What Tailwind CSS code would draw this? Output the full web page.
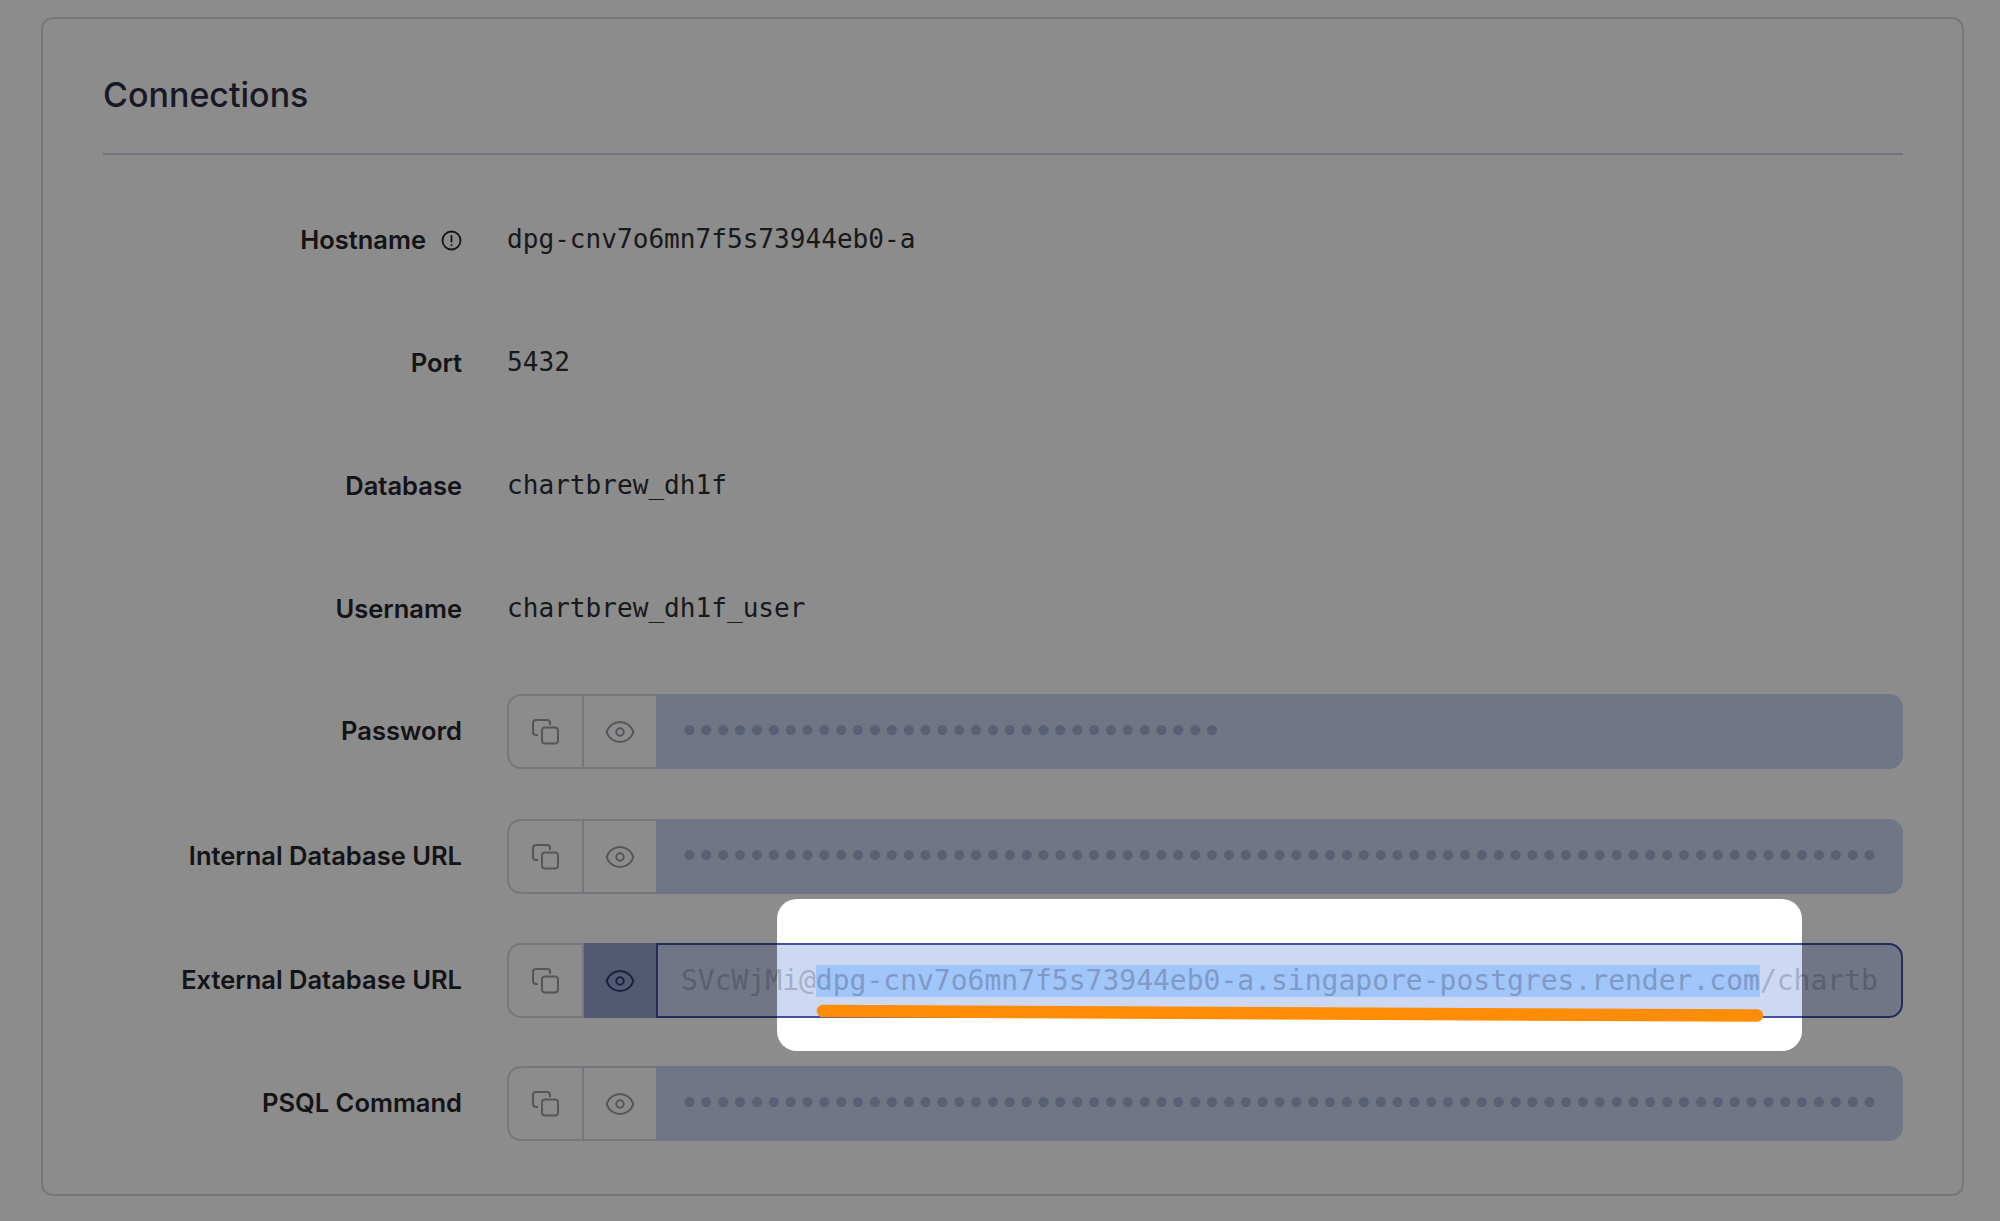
<!DOCTYPE html>
<html lang="en">
<head>
    <meta charset="UTF-8">
    <title>Connections</title>
    <script src="https://cdn.jsdelivr.net/npm/@tailwindcss/browser@4"></script>
</head>
<body class="relative w-[2000px] h-[1221px] overflow-hidden bg-white font-['Inter',sans-serif]">
    <!-- Card -->
    <section class="ml-[41px] mt-[17px] w-[1923px] h-[1179px] border-2 border-[#d8d8e4] rounded-[12px] pl-[60px] pr-[59px]">
        <h2 class="h-[136px] pt-[52px] text-[34px] leading-[48px] font-medium text-[#2f2f44] border-b-2 border-[#cfd2e6]">Connections</h2>

        <div class="flex items-center h-[75px] mt-[48px] mb-[48px]">
            <div class="flex items-center justify-end gap-[15px] w-[359px] mr-[45px] text-[25.5px] font-semibold text-[#26262c]">
                Hostname
                <svg class="w-[21px] h-[21px]" viewBox="0 0 21 21" fill="none" stroke="#26262c" stroke-width="1.8" stroke-linecap="round"><circle cx="10.5" cy="10.5" r="9"/><path d="M10.5 6v5.5"/><path d="M10.5 14.8v.2"/></svg>
            </div>
            <span class="font-['DejaVu_Sans_Mono',monospace] text-[26.1px] text-[#2e2e33] -mt-[2px]">dpg-cnv7o6mn7f5s73944eb0-a</span>
        </div>
        <div class="flex items-center h-[75px] mb-[48px]">
            <div class="w-[359px] mr-[45px] text-right text-[25.5px] font-semibold text-[#26262c]">Port</div>
            <span class="font-['DejaVu_Sans_Mono',monospace] text-[26.1px] text-[#2e2e33] -mt-[2px]">5432</span>
        </div>
        <div class="flex items-center h-[75px] mb-[48px]">
            <div class="w-[359px] mr-[45px] text-right text-[25.5px] font-semibold text-[#26262c]">Database</div>
            <span class="font-['DejaVu_Sans_Mono',monospace] text-[26.1px] text-[#2e2e33] -mt-[2px]">chartbrew_dh1f</span>
        </div>
        <div class="flex items-center h-[75px] mb-[47px]">
            <div class="w-[359px] mr-[45px] text-right text-[25.5px] font-semibold text-[#26262c]">Username</div>
            <span class="font-['DejaVu_Sans_Mono',monospace] text-[26.1px] text-[#2e2e33] -mt-[2px]">chartbrew_dh1f_user</span>
        </div>

        <!-- Password -->
        <div class="flex items-center h-[75px] mb-[50px]">
            <div class="w-[359px] mr-[45px] text-right text-[25.5px] font-semibold text-[#26262c]">Password</div>
            <div class="flex flex-1 h-full">
                <button class="flex items-center justify-center w-[77px] border-2 border-[#d8d8e2] rounded-l-[14px]">
                    <svg class="w-[27px] h-[26px]" viewBox="0 0 27 26" fill="none" stroke="#9b9ba6" stroke-width="2"><path d="M6 16H4a3 3 0 0 1-3-3V4a3 3 0 0 1 3-3h11a3 3 0 0 1 3 3v2"/><rect x="10" y="8.5" width="16" height="16" rx="3"/></svg>
                </button>
                <button class="flex items-center justify-center w-[72px] border-y-2 border-r-0 border-[#d8d8e2]">
                    <svg class="w-[32px] h-[32px]" viewBox="0 0 24 24" fill="none" stroke="#9b9ba6" stroke-width="1.5"><path d="M2.036 12.322a1.012 1.012 0 010-.639C3.423 7.51 7.36 4.5 12 4.5c4.638 0 8.573 3.007 9.963 7.178.07.207.07.431 0 .639C20.577 16.49 16.64 19.5 12 19.5c-4.638 0-8.573-3.007-9.963-7.178z"/><circle cx="12" cy="12" r="2.8"/></svg>
                </button>
                <div class="flex-1 flex items-center pl-[25px] bg-[#cdd8f3] rounded-r-[14px] overflow-hidden font-['DejaVu_Sans_Mono',monospace] font-bold text-[28px] text-[#a2aed3] whitespace-nowrap">••••••••••••••••••••••••••••••••</div>
            </div>
        </div>

        <!-- Internal Database URL -->
        <div class="flex items-center h-[75px] mb-[49px]">
            <div class="w-[359px] mr-[45px] text-right text-[25.5px] font-semibold text-[#26262c]">Internal Database URL</div>
            <div class="flex flex-1 h-full">
                <button class="flex items-center justify-center w-[77px] border-2 border-[#d8d8e2] rounded-l-[14px]">
                    <svg class="w-[27px] h-[26px]" viewBox="0 0 27 26" fill="none" stroke="#9b9ba6" stroke-width="2"><path d="M6 16H4a3 3 0 0 1-3-3V4a3 3 0 0 1 3-3h11a3 3 0 0 1 3 3v2"/><rect x="10" y="8.5" width="16" height="16" rx="3"/></svg>
                </button>
                <button class="flex items-center justify-center w-[72px] border-y-2 border-r-0 border-[#d8d8e2]">
                    <svg class="w-[32px] h-[32px]" viewBox="0 0 24 24" fill="none" stroke="#9b9ba6" stroke-width="1.5"><path d="M2.036 12.322a1.012 1.012 0 010-.639C3.423 7.51 7.36 4.5 12 4.5c4.638 0 8.573 3.007 9.963 7.178.07.207.07.431 0 .639C20.577 16.49 16.64 19.5 12 19.5c-4.638 0-8.573-3.007-9.963-7.178z"/><circle cx="12" cy="12" r="2.8"/></svg>
                </button>
                <div class="flex-1 flex items-center pl-[25px] bg-[#cdd8f3] rounded-r-[14px] overflow-hidden font-['DejaVu_Sans_Mono',monospace] font-bold text-[28px] text-[#a2aed3] whitespace-nowrap">•••••••••••••••••••••••••••••••••••••••••••••••••••••••••••••••••••••••</div>
            </div>
        </div>

        <!-- External Database URL (revealed) -->
        <div class="flex items-center h-[75px] mb-[48px]">
            <div class="w-[359px] mr-[45px] text-right text-[25.5px] font-semibold text-[#26262c]">External Database URL</div>
            <div class="flex flex-1 h-full">
                <button class="flex items-center justify-center w-[77px] border-2 border-[#d8d8e2] rounded-l-[14px]">
                    <svg class="w-[27px] h-[26px]" viewBox="0 0 27 26" fill="none" stroke="#9b9ba6" stroke-width="2"><path d="M6 16H4a3 3 0 0 1-3-3V4a3 3 0 0 1 3-3h11a3 3 0 0 1 3 3v2"/><rect x="10" y="8.5" width="16" height="16" rx="3"/></svg>
                </button>
                <button class="flex items-center justify-center w-[72px] bg-[#95a3cc]">
                    <svg class="w-[32px] h-[32px]" viewBox="0 0 24 24" fill="none" stroke="#2f3a74" stroke-width="1.5"><path d="M2.036 12.322a1.012 1.012 0 010-.639C3.423 7.51 7.36 4.5 12 4.5c4.638 0 8.573 3.007 9.963 7.178.07.207.07.431 0 .639C20.577 16.49 16.64 19.5 12 19.5c-4.638 0-8.573-3.007-9.963-7.178z"/><circle cx="12" cy="12" r="2.8"/></svg>
                </button>
                <div class="flex-1 flex items-center pl-[23px] bg-[#cdd8f3] border-2 border-[#4351a8] rounded-r-[14px] overflow-hidden font-['DejaVu_Sans_Mono',monospace] text-[28px] text-[#a3aecc] whitespace-nowrap">SVcWjMi@<span class="inline-block leading-[32px] bg-[#a0c6fa] text-[#8099c6]">dpg-cnv7o6mn7f5s73944eb0-a.singapore-postgres.render.com</span>/chartb</div>
            </div>
        </div>

        <!-- PSQL Command -->
        <div class="flex items-center h-[75px]">
            <div class="w-[359px] mr-[45px] text-right text-[25.5px] font-semibold text-[#26262c]">PSQL Command</div>
            <div class="flex flex-1 h-full">
                <button class="flex items-center justify-center w-[77px] border-2 border-[#d8d8e2] rounded-l-[14px]">
                    <svg class="w-[27px] h-[26px]" viewBox="0 0 27 26" fill="none" stroke="#9b9ba6" stroke-width="2"><path d="M6 16H4a3 3 0 0 1-3-3V4a3 3 0 0 1 3-3h11a3 3 0 0 1 3 3v2"/><rect x="10" y="8.5" width="16" height="16" rx="3"/></svg>
                </button>
                <button class="flex items-center justify-center w-[72px] border-y-2 border-r-0 border-[#d8d8e2]">
                    <svg class="w-[32px] h-[32px]" viewBox="0 0 24 24" fill="none" stroke="#9b9ba6" stroke-width="1.5"><path d="M2.036 12.322a1.012 1.012 0 010-.639C3.423 7.51 7.36 4.5 12 4.5c4.638 0 8.573 3.007 9.963 7.178.07.207.07.431 0 .639C20.577 16.49 16.64 19.5 12 19.5c-4.638 0-8.573-3.007-9.963-7.178z"/><circle cx="12" cy="12" r="2.8"/></svg>
                </button>
                <div class="flex-1 flex items-center pl-[25px] bg-[#cdd8f3] rounded-r-[14px] overflow-hidden font-['DejaVu_Sans_Mono',monospace] font-bold text-[28px] text-[#a2aed3] whitespace-nowrap">•••••••••••••••••••••••••••••••••••••••••••••••••••••••••••••••••••••••</div>
            </div>
        </div>
    </section>

    <!-- Spotlight: dims everything except the hole -->
    <div class="absolute left-[777px] top-[899px] w-[1025px] h-[152px] rounded-[20px] shadow-[0_0_0_2200px_rgba(0,0,0,0.45)]"></div>

    <!-- Orange annotation stroke -->
    <svg class="absolute left-0 top-0 w-[2000px] h-[1221px]" viewBox="0 0 2000 1221" fill="none">
        <path d="M823 1011L1757 1015.5" stroke="#ff8c05" stroke-width="12.5" stroke-linecap="round"/>
    </svg>
</body>
</html>
